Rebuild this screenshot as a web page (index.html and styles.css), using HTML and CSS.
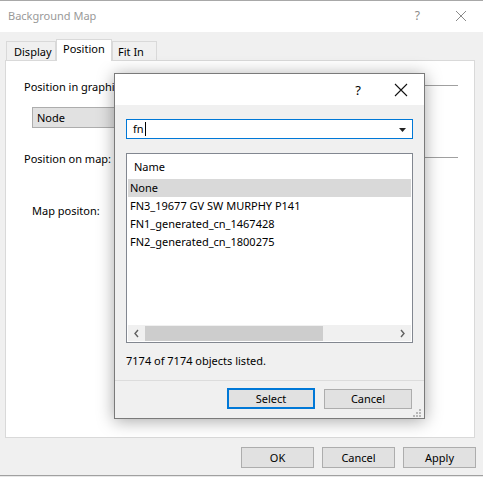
FILE: index.html
```html
<!DOCTYPE html>
<html>
<head>
<meta charset="utf-8">
<link rel="stylesheet" href="styles.css">
</head>
<body>
<div class="app-top"></div>
<div class="window">
  <div class="titlebar">
    <span class="title">Background Map</span>
    <span class="tb-help">?</span>
    <svg class="tb-close" width="12" height="12" viewBox="0 0 12 12"><path d="M1 1 L11 11 M11 1 L1 11" stroke="#8a8a8a" stroke-width="1"/></svg>
  </div>
  <div class="winbody">
    <div class="tabs">
      <div class="tab">Display</div>
      <div class="tab active">Position</div>
      <div class="tab">Fit In</div>
    </div>
    <div class="panel">
      <div class="group-row">
        <span class="group-label">Position in graphic:</span>
        <span class="group-line"></span>
      </div>
      <div class="node-combo">Node</div>
      <div class="group-row second">
        <span class="group-label">Position on map:</span>
        <span class="group-line"></span>
      </div>
      <div class="map-pos">Map positon:</div>
    </div>
    <div class="buttons">
      <div class="btn">OK</div>
      <div class="btn">Cancel</div>
      <div class="btn">Apply</div>
    </div>
  </div>
</div>
<div class="app-bottom"></div>

<div class="dialog">
  <div class="d-titlebar">
    <span class="d-help">?</span>
    <svg class="d-close" width="14" height="14" viewBox="0 0 14 14"><path d="M1 1 L13 13 M13 1 L1 13" stroke="#111" stroke-width="1.1"/></svg>
  </div>
  <div class="d-body">
    <div class="d-combo">
      <span class="d-input">fn<span class="caret"></span></span>
      <svg class="d-arrow" width="7" height="4" viewBox="0 0 7 4"><path d="M0 0 H7 L3.5 4 Z" fill="#222"/></svg>
    </div>
    <div class="d-list">
      <div class="d-head">Name</div>
      <div class="d-rows">
        <div class="d-row sel">None</div>
        <div class="d-row">FN3_19677 GV SW MURPHY P141</div>
        <div class="d-row">FN1_generated_cn_1467428</div>
        <div class="d-row">FN2_generated_cn_1800275</div>
      </div>
      <div class="hscroll">
        <svg class="sb-arrow" width="17" height="15" viewBox="0 0 17 15"><path d="M10 4 L7 7.5 L10 11" fill="none" stroke="#606060" stroke-width="1.4"/></svg>
        <div class="sb-track"><div class="sb-thumb"></div></div>
        <svg class="sb-arrow" width="17" height="15" viewBox="0 0 17 15"><path d="M7 4 L10 7.5 L7 11" fill="none" stroke="#606060" stroke-width="1.4"/></svg>
      </div>
    </div>
    <div class="d-status">7174 of 7174 objects listed.</div>
  </div>
  <div class="d-footer">
    <div class="dbtn default">Select</div>
    <div class="dbtn">Cancel</div>
    <svg class="grip" width="8" height="8" viewBox="0 0 8 8"><g fill="#b8b8b8"><rect x="6" y="0" width="2" height="2"/><rect x="3" y="3" width="2" height="2"/><rect x="6" y="3" width="2" height="2"/><rect x="0" y="6" width="2" height="2"/><rect x="3" y="6" width="2" height="2"/><rect x="6" y="6" width="2" height="2"/></g></svg>
  </div>
</div>
</body>
</html>
```
FILE: styles.css
```css
* { box-sizing: border-box; }
html, body { margin: 0; padding: 0; }
body {
  width: 483px;
  height: 477px;
  overflow: hidden;
  font-family: "Noto Sans", "Open Sans", sans-serif;
  font-size: 11px;
  color: #000;
  background: #f0f0f0;
  position: relative;
}
.app-top {
  height: 1px;
  background: #a8a8a8;
}
.window {
  height: 474px;
  display: flex;
  flex-direction: column;
}
.titlebar {
  height: 31px;
  background: #fff;
  display: flex;
  align-items: center;
  padding-left: 8px;
}
.title {
  color: #999;
  font-size: 11px;
  flex: 1;
  margin-top: -2px;
}
.tb-help {
  color: #8a8a8a;
  font-size: 12px;
  margin-right: 35px;
  margin-top: -2px;
}
.tb-close {
  margin-right: 16px;
  margin-top: -2px;
}
.winbody {
  flex: 1;
  background: #f0f0f0;
  display: flex;
  flex-direction: column;
  padding: 6px 8px 0 5px;
}
.tabs {
  display: flex;
  align-items: flex-end;
  height: 22px;
  padding-left: 1px;
}
.tab {
  height: 19px;
  border: 1px solid #d9d9d9;
  border-bottom: none;
  padding: 0 5px 0 7px;
  line-height: 19px;
  background: #f0f0f0;
}
.tab:first-child { width: 50px; }
.tab.active {
  height: 22px;
  background: #fff;
  border-color: #d9d9d9;
  line-height: 18px;
  width: 56px;
  padding-left: 6px;
  margin-bottom: -1px;
  position: relative;
  z-index: 1;
}
.tab:last-child { width: 45px; padding-left: 5px; }
.panel {
  height: 378px;
  background: #fff;
  border: 1px solid #d9d9d9;
  padding: 17px 16px 0 18px;
}
.group-row {
  display: flex;
  align-items: center;
  height: 16px;
}
.group-row.second { margin-top: 22px; }
.group-label { white-space: nowrap; }
.group-line {
  flex: 1;
  height: 1px;
  background: #a0a0a0;
  margin-left: 4px;
  margin-top: -2px;
}
.node-combo {
  margin: 13px 0 0 8px;
  width: 200px;
  height: 21px;
  background: #e1e1e1;
  border: 1px solid #adadad;
  padding-left: 4px;
  line-height: 19px;
}
.map-pos {
  margin: 37px 0 0 8px;
}
.buttons {
  display: flex;
  justify-content: flex-end;
  gap: 8px;
  margin-top: 9px;
  padding-right: 0;
  margin-right: -1px;
}
.btn {
  width: 73px;
  height: 21px;
  background: #e1e1e1;
  border: 1px solid #adadad;
  text-align: center;
  line-height: 19px;
}
.app-bottom {
  height: 2px;
  background: #a0a0a0;
  border-bottom: 1px solid #e8e8e8;
}

/* dialog */
.dialog {
  position: absolute;
  left: 114px;
  top: 73px;
  width: 311px;
  height: 346px;
  background: #f0f0f0;
  border: 1px solid #7a7a7a;
  box-shadow: 0 2px 16px rgba(0,0,0,0.35);
  display: flex;
  flex-direction: column;
}
.d-titlebar {
  height: 31px;
  background: #fff;
  display: flex;
  align-items: center;
  justify-content: flex-end;
}
.d-help {
  font-size: 13px;
  margin-right: 33px;
}
.d-close {
  margin-right: 16px;
}
.d-body {
  padding: 14px 11px 0 11px;
  flex: 1;
}
.d-combo {
  height: 20px;
  border: 1px solid #0078d7;
  background: #fff;
  display: flex;
  align-items: center;
  padding: 0 6px 0 6px;
}
.d-input {
  flex: 1;
  display: flex;
  align-items: center;
  line-height: 18px;
}
.caret {
  display: inline-block;
  width: 1px;
  height: 14px;
  background: #000;
  margin-left: 1px;
}
.d-arrow { margin-top: 1px; }
.d-list {
  margin-top: 14px;
  height: 190px;
  border: 1px solid #828790;
  background: #fff;
  display: flex;
  flex-direction: column;
  padding: 0 1px 1px 1px;
}
.d-head {
  height: 25px;
  line-height: 25px;
  padding-left: 6px;
}
.d-rows { flex: 1; }
.d-row {
  height: 18px;
  line-height: 18px;
  padding-left: 2px;
  white-space: nowrap;
}
.d-row.sel { background: #d9d9d9; }
.hscroll {
  height: 16px;
  background: #f0f0f0;
  display: flex;
  align-items: center;
}
.sb-track {
  flex: 1;
  height: 15px;
  display: flex;
  align-items: center;
}
.sb-thumb {
  width: 178px;
  height: 15px;
  background: #cdcdcd;
}
.d-status {
  margin-top: 10px;
  line-height: 16px;
}
.d-footer {
  height: 38px;
  border-top: 1px solid #dcdcdc;
  position: relative;
  display: flex;
  justify-content: flex-end;
  align-items: flex-start;
  gap: 9px;
  padding: 8px 12px 0 0;
}
.dbtn {
  width: 88px;
  height: 20px;
  background: #e1e1e1;
  border: 1px solid #adadad;
  text-align: center;
  line-height: 18px;
}
.dbtn.default {
  width: 88px;
  height: 21px;
  margin-top: -1px;
  border: 2px solid #0078d7;
  line-height: 17px;
}
.grip {
  position: absolute;
  right: 3px;
  bottom: 1px;
}
```
